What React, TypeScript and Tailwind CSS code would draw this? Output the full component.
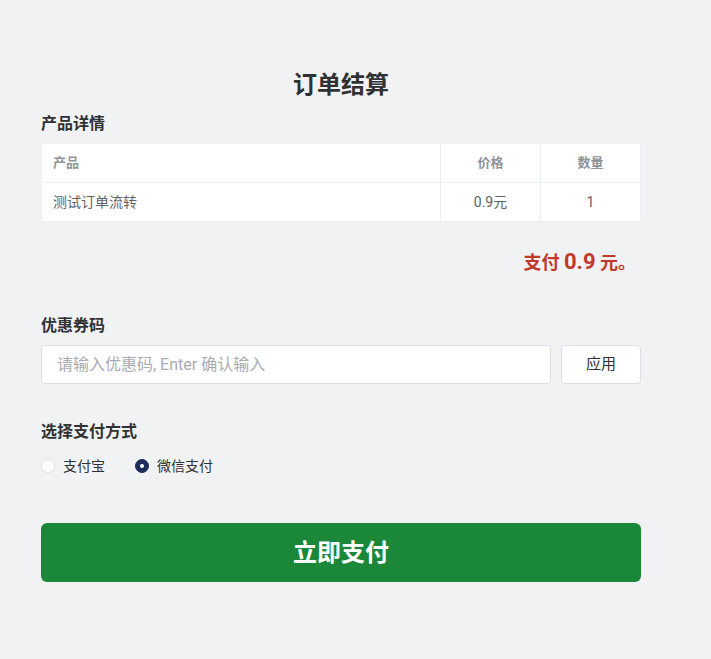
import React, { useState } from 'react';

const font = { fontFamily: "Roboto, 'Noto Sans CJK SC', sans-serif" };

export default function App() {
  const [method, setMethod] = useState<'alipay' | 'wechat'>('wechat');
  const [code, setCode] = useState('');

  return (
    <div className="min-h-[659px] w-full bg-[#f1f2f4] text-[#303133]" style={font}>
      <div className="w-[600px] ml-[41px] pt-[69px]">
        <h1 className="text-center text-[24px] font-bold leading-[32px] text-[#303133]">订单结算</h1>

        <h2 className="mt-[11px] text-[16px] font-bold leading-[24px]">产品详情</h2>

        {/* product table */}
        <div className="mt-[7px] border border-[#ebeef5] bg-white">
          <div className="grid grid-cols-[1fr_100px_100px] h-[39px] items-center text-[13px] font-bold text-[#909399] border-b border-[#ebeef5]">
            <div className="px-[11px] h-full flex items-center">产品</div>
            <div className="h-full flex items-center justify-center border-l border-[#ebeef5]">价格</div>
            <div className="h-full flex items-center justify-center border-l border-[#ebeef5]">数量</div>
          </div>
          <div className="grid grid-cols-[1fr_100px_100px] h-[38px] items-center text-[14px] text-[#606266]">
            <div className="px-[11px] h-full flex items-center">测试订单流转</div>
            <div className="h-full flex items-center justify-center border-l border-[#ebeef5]">0.9元</div>
            <div className="h-full flex items-center justify-center border-l border-[#ebeef5]">1</div>
          </div>
        </div>

        <div className="mt-[26px] pr-[5px] text-right leading-[28px] font-bold text-[#c0392b]">
          <span className="text-[18px]">支付 </span>
          <span className="text-[22px]">0.9</span>
          <span className="text-[18px]"> 元。</span>
        </div>

        <h2 className="mt-[36px] text-[16px] font-bold leading-[24px]">优惠券码</h2>
        <div className="mt-[7px] flex gap-[10px]">
          <input
            value={code}
            onChange={(e) => setCode(e.target.value)}
            placeholder="请输入优惠码, Enter 确认输入"
            className="h-[39px] flex-1 rounded-[4px] border border-[#dcdfe6] bg-white px-[15px] text-[16px] text-[#606266] placeholder:text-[#a8abb2] outline-none"
          />
          <button className="h-[39px] w-[80px] rounded-[4px] border border-[#dcdfe6] bg-white text-[15px] text-[#303133]">
            应用
          </button>
        </div>

        <h2 className="mt-[36px] text-[16px] font-bold leading-[24px]">选择支付方式</h2>
        <div className="mt-[12px] flex h-[20px] items-center gap-[30px] text-[14px] text-[#303133]">
          <label className="flex items-center gap-[8px] cursor-pointer" onClick={() => setMethod('alipay')}>
            <span
              className={`flex h-[14px] w-[14px] items-center justify-center rounded-full border ${
                method === 'alipay' ? 'border-[#1e2a5a] bg-[#1e2a5a]' : 'border-[#dcdfe6] bg-white'
              }`}
            >
              {method === 'alipay' && <span className="h-[4px] w-[4px] rounded-full bg-white" />}
            </span>
            支付宝
          </label>
          <label className="flex items-center gap-[8px] cursor-pointer" onClick={() => setMethod('wechat')}>
            <span
              className={`flex h-[14px] w-[14px] items-center justify-center rounded-full border ${
                method === 'wechat' ? 'border-[#1e2a5a] bg-[#1e2a5a]' : 'border-[#dcdfe6] bg-white'
              }`}
            >
              {method === 'wechat' && <span className="h-[4px] w-[4px] rounded-full bg-white" />}
            </span>
            微信支付
          </label>
        </div>

        <button className="mt-[47px] h-[59px] w-full rounded-[6px] bg-[#1a8838] text-[24px] font-bold text-white">
          立即支付
        </button>
      </div>
    </div>
  );
}
